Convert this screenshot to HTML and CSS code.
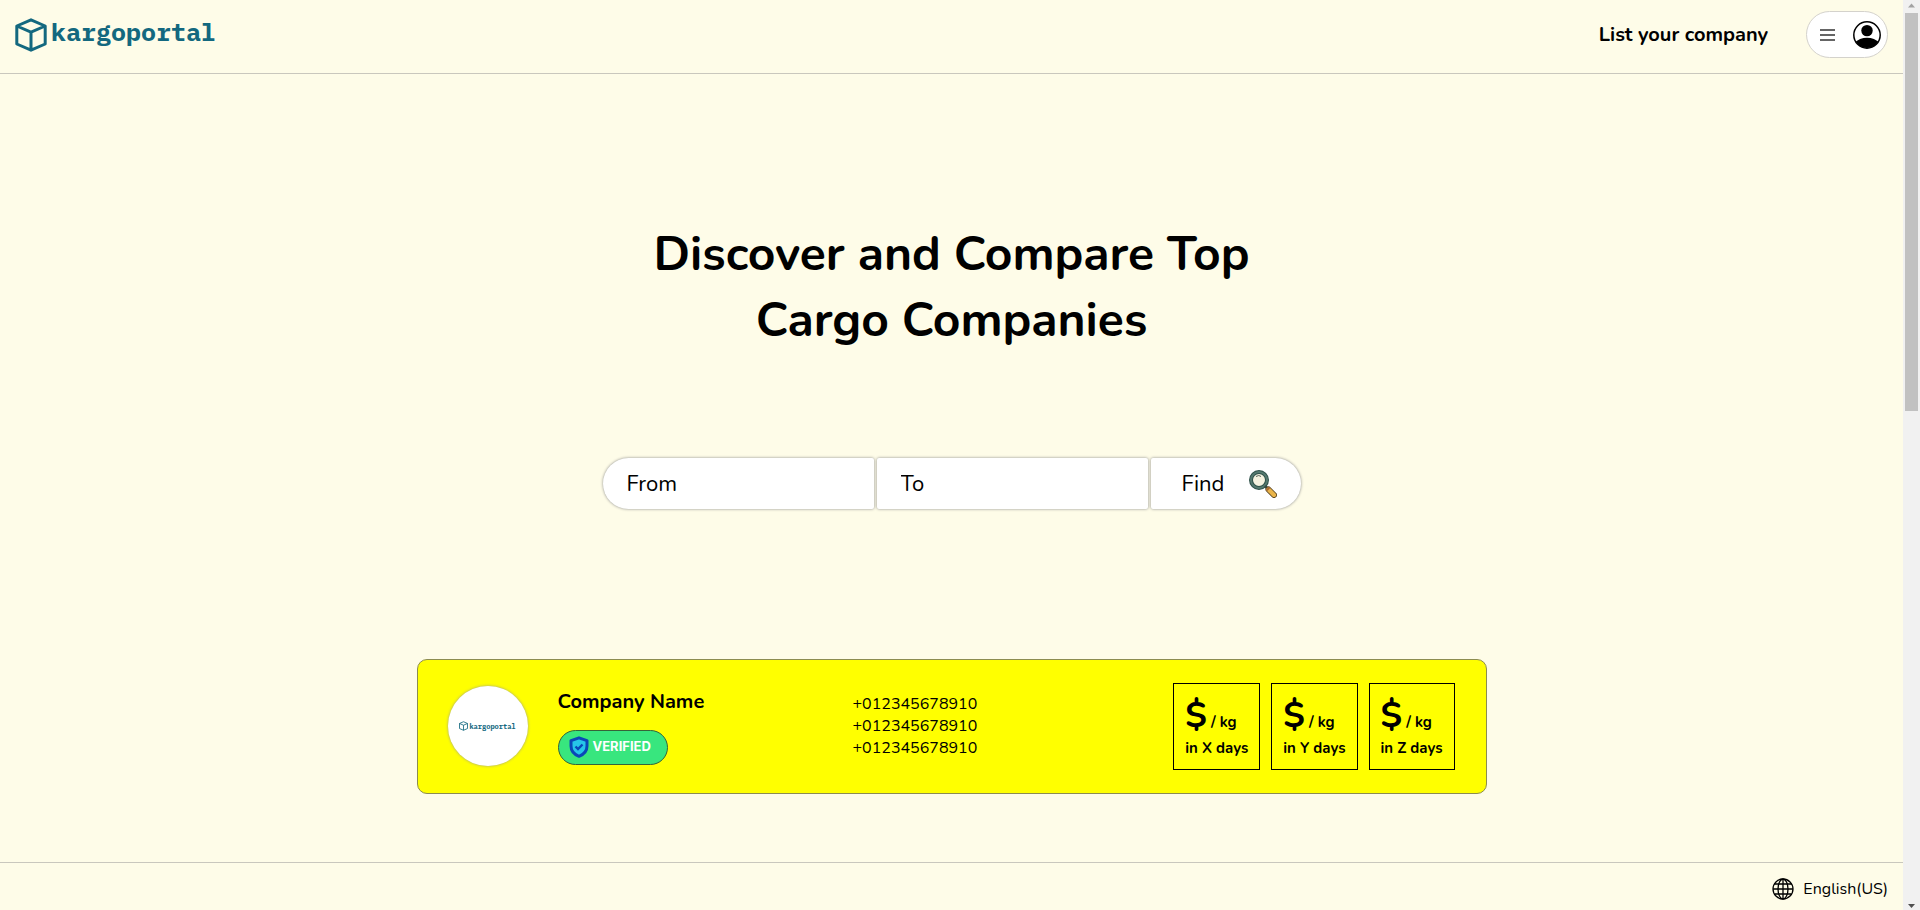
FILE: index.html
```html
<!DOCTYPE html>
<html lang="en">
<head>
<meta charset="utf-8">
<title>kargoportal</title>
<link rel="stylesheet" href="styles.css">
</head>
<body>
<svg width="0" height="0" class="sprite" aria-hidden="true">
  <symbol id="cube" viewBox="0 0 32 34">
    <path d="M16 1.8 30.2 8v18L16 32.2 1.8 26V8z M1.8 8 16 14.2 30.2 8 M16 14.2v18" fill="none" stroke="currentColor" stroke-width="3" stroke-linejoin="round"/>
  </symbol>
</svg>
<div class="page">
  <header class="topbar">
    <a class="brand" href="#"><svg class="brand-icon"><use href="#cube"/></svg><span class="brand-name">kargoportal</span></a>
    <nav class="topnav">
      <a class="list-link" href="#">List your company</a>
      <button class="user-menu" type="button" aria-label="Open menu">
        <svg width="16" height="12" viewBox="0 0 16 12"><path d="M0 1h15M0 6h15M0 11h15" stroke="#333" stroke-width="1.5"/></svg>
        <svg width="28" height="28" viewBox="0 0 28 28">
          <clipPath id="face"><circle cx="14" cy="14" r="13"/></clipPath>
          <circle cx="14" cy="14" r="13.2" fill="#fff" stroke="#000" stroke-width="1.5"/>
          <circle cx="14" cy="9.6" r="5.7"/>
          <path clip-path="url(#face)" d="M1 22C5 18.500 9 16.800 14 16.800S23 18.500 27 22V28H1z"/>
        </svg>
      </button>
    </nav>
  </header>
  <main class="content">
    <h1 class="headline">Discover and Compare Top Cargo Companies</h1>
    <form class="search">
      <input class="field field-first" type="text" placeholder="From" aria-label="From">
      <input class="field" type="text" placeholder="To" aria-label="To">
      <button class="find" type="button">Find
        <svg width="28" height="28" viewBox="0 0 28 28">
          <circle cx="10" cy="10" r="8" fill="#f5f2df" stroke="#2f5149" stroke-width="4"/>
          <circle cx="10" cy="10" r="8" fill="none" stroke="#55796f" stroke-width="2"/>
          <path d="M7 6.500q3-2 5 0" fill="none" stroke="#59665b"/>
          <path d="M16 16l3 3" stroke="#354b43" stroke-width="3"/>
          <path d="M19.500 19.500l5.500 5.500" stroke="#55401d" stroke-width="6" stroke-linecap="round"/>
          <path d="M19.500 19.500l5.500 5.500" stroke="#e9b44a" stroke-width="4.400" stroke-linecap="round"/>
          <path d="M17.600 20.400l3-3" stroke="#a96632" stroke-width="2"/>
        </svg>
      </button>
    </form>
    <article class="card">
      <div class="avatar"><svg class="avatar-icon"><use href="#cube"/></svg><span>kargoportal</span></div>
      <div class="company">
        <h2 class="company-name">Company Name</h2>
        <span class="badge">
          <svg width="20" height="22" viewBox="0 0 20 22"><path d="M10 1.800 18 4.600V10c0 5-3.300 8.500-8 10.300C5.300 18.500 2 15 2 10V4.600z" fill="#26c6e8" stroke="#0a48b8" stroke-width="3" stroke-linejoin="round"/><path d="M6.500 10.500l2.500 2.500 4.500-4.500" fill="none" stroke="#0a48b8" stroke-width="2.400"/></svg>
          <span class="badge-text">VERIFIED</span>
        </span>
      </div>
      <ul class="phones"><li>+012345678910</li><li>+012345678910</li><li>+012345678910</li></ul>
      <ul class="prices">
        <li class="price"><span><b class="dollar">$</b> / kg</span><span>in X days</span></li>
        <li class="price"><span><b class="dollar">$</b> / kg</span><span>in Y days</span></li>
        <li class="price"><span><b class="dollar">$</b> / kg</span><span>in Z days</span></li>
      </ul>
    </article>
  </main>
  <footer class="footer">
    <button class="language" type="button">
      <svg width="22" height="22" viewBox="0 0 22 22" fill="none" stroke="#000" stroke-width="1.300"><circle cx="11" cy="11" r="10"/><ellipse cx="11" cy="11" rx="5" ry="10"/><path d="M11 1v20M1 11h20M2.500 6h17M2.500 16h17"/></svg>
      English(US)
    </button>
  </footer>
</div>
<div class="scrollbar" aria-hidden="true">
  <svg class="arrow" viewBox="0 0 17 13"><path d="M5 7.500h7L8.500 3.500z" fill="#a3a3a3"/></svg>
  <div class="track"><div class="thumb"></div></div>
  <svg class="arrow" viewBox="0 0 17 13"><path d="M5 7h7l-3.500 4z" fill="#505050"/></svg>
</div>
</body>
</html>
```
FILE: styles.css
```css
* { box-sizing: border-box; }
body {
  margin: 0;
  height: 100vh;
  display: flex;
  overflow: hidden;
  background: #fefce8;
  color: #000;
  font-family: "Nunito", "Open Sans", sans-serif;
  font-size: 16px;
}
a { color: inherit; text-decoration: none; }
button { font: inherit; color: inherit; cursor: pointer; }
ul { list-style: none; margin: 0; padding: 0; }
svg { flex: none; }
.sprite { position: absolute; }

.page { flex: 1; min-width: 0; display: flex; flex-direction: column; }

.topbar {
  display: flex;
  align-items: center;
  justify-content: space-between;
  padding: 11px 15px 15px;
  border-bottom: 1px solid #c9c7bd;
}
.brand {
  display: flex;
  align-items: center;
  gap: 4px;
  color: #13687f;
  font: bold 25px/28px "IBM Plex Mono", "Liberation Mono", monospace;
}
.brand-icon { width: 32px; height: 34px; }
.brand-name { padding-bottom: 6px; }
.topnav { display: flex; align-items: center; gap: 38px; }
.list-link { font-size: 20px; font-weight: 700; }
.user-menu {
  display: flex;
  align-items: center;
  gap: 17px;
  height: 47px;
  padding: 0 6px 0 13px;
  background: #fff;
  border: 1px solid #d4d2cc;
  border-radius: 24px;
}

.content {
  flex: 1;
  display: flex;
  flex-direction: column;
  align-items: center;
  padding-top: 147px;
}
.headline {
  max-width: 640px;
  margin: 0 0 105px;
  font-size: 48px;
  line-height: 66px;
  font-weight: 700;
  text-align: center;
}
.search { display: flex; gap: 3px; margin-bottom: 150px; }
.field, .find {
  height: 51px;
  border: 0;
  border-radius: 2px;
  background: #fff;
  box-shadow: 0 0 3px #888;
  font: 22px "Nunito", "Open Sans", sans-serif;
}
.field { width: 271px; padding: 0 24px; }
.field::placeholder { color: #000; opacity: 1; }
.field-first { border-radius: 26px 2px 2px 26px; }
.find {
  display: flex;
  align-items: center;
  justify-content: space-between;
  width: 150px;
  padding: 0 24px 0 31px;
  border-radius: 2px 26px 26px 2px;
}

.card {
  display: grid;
  grid-template-columns: 80px 265px 1fr auto;
  column-gap: 30px;
  align-items: center;
  width: 1070px;
  max-width: 96%;
  padding: 22px 31px 23px 30px;
  background: #ff0;
  border: 1px solid #8c8c50;
  border-radius: 10px;
}
.avatar {
  display: flex;
  align-items: center;
  justify-content: center;
  gap: 1px;
  height: 80px;
  background: #fff;
  border-radius: 50%;
  box-shadow: 0 0 3px #999;
  color: #13687f;
  font: bold 7px "IBM Plex Mono", "Liberation Mono", monospace;
}
.avatar-icon { width: 9px; height: 10px; }
.company { display: flex; flex-direction: column; align-items: flex-start; gap: 15px; }
.company-name { margin: 0; font-size: 20px; line-height: 27px; font-weight: 700; }
.badge {
  display: flex;
  align-items: center;
  gap: 4px;
  height: 35px;
  padding: 0 16px 0 10px;
  background: #38e67e;
  border: 1px solid #35643a;
  border-radius: 18px;
  color: #fff;
  font: 700 13px "Inter", sans-serif;
}
.badge-text { padding-bottom: 2px; }
.phones { line-height: 22px; }
.prices { display: flex; gap: 11px; padding-top: 1px; }
.price {
  display: flex;
  flex-direction: column;
  height: 87px;
  padding: 12px 11px 8px;
  border: 1px solid #000;
  font-size: 15px;
  font-weight: 700;
  line-height: 20px;
}
.price span:first-child { height: 42px; line-height: 44px; }
.dollar { font-size: 36px; font-weight: 700; line-height: 40px; }

.footer {
  display: flex;
  justify-content: flex-end;
  padding: 13px 15px 8px;
  border-top: 1px solid #c9c7bd;
}
.language {
  display: flex;
  align-items: center;
  gap: 9px;
  height: 26px;
  padding: 0;
  border: 0;
  background: none;
}

.scrollbar { width: 17px; display: flex; flex-direction: column; background: #f1f1f1; }
.arrow { width: 17px; height: 13px; }
.track { flex: 1; padding: 0 2px; }
.thumb { height: 45%; background: #c1c1c1; }
```
